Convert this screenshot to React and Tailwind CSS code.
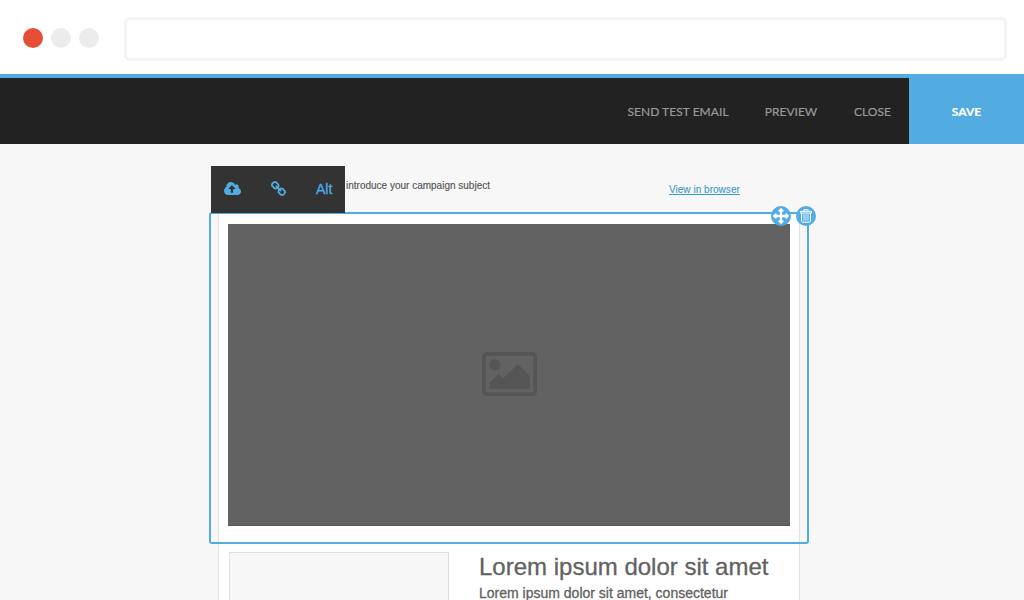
import React from "react";

function CloudUploadIcon() {
  return (
    <svg className="h-[13px] w-[17px]" viewBox="-64 128 1920 1408" preserveAspectRatio="none" fill="currentColor">
      <path d="M1216 864q0-14-9-23l-352-352q-9-9-23-9t-23 9l-351 351q-10 12-10 24 0 14 9 23t23 9h224v352q0 13 9.5 22.5t22.5 9.5h192q13 0 22.5-9.5t9.5-22.5v-352h224q13 0 22.5-9.5t9.5-22.5zm640 288q0 159-112.5 271.5t-271.5 112.5h-1088q-185 0-316.5-131.5t-131.5-316.5q0-130 70-240t188-165q-2-30-2-43 0-212 150-362t362-150q156 0 285.5 87t188.5 231q71-62 166-62 106 0 181 75t75 181q0 76-41 138 130 31 213.5 135.5t83.5 238.5z" />
    </svg>
  );
}

function LinkIcon() {
  return (
    <svg className="h-[15px] w-[15px]" viewBox="80 16 1632 1632" fill="currentColor">
      <path d="M1520 1216q0-40-28-68l-208-208q-28-28-68-28-42 0-72 32 3 3 19 18.5t21.5 21.5 15 19 13 25.5 3.5 27.5q0 40-28 68t-68 28q-15 0-27.5-3.5t-25.5-13-19-15-21.5-21.5-18.5-19q-33 31-33 73 0 40 28 68l206 207q27 27 68 27 40 0 68-26l147-146q28-28 28-67zm-703-705q0-40-28-68l-206-207q-28-28-68-28-39 0-68 27l-147 146q-28 28-28 67 0 40 28 68l208 208q27 27 68 27 42 0 72-31-3-3-19-18.5t-21.5-21.5-15-19-13-25.5-3.5-27.5q0-40 28-68t68-28q15 0 27.5 3.5t25.5 13 19 15 21.5 21.5 18.5 19q33-31 33-73zm895 705q0 120-85 203l-147 146q-83 83-203 83-121 0-204-85l-206-207q-83-83-83-203 0-123 88-209l-88-88q-86 88-208 88-120 0-204-84l-208-208q-84-84-84-204t85-203l147-146q83-83 203-83 121 0 204 85l206 207q83 83 83 203 0 123-88 209l88 88q86-88 208-88 120 0 204 84l208 208q84 84 84 204z" />
    </svg>
  );
}

function MoveIcon() {
  return (
    <svg className="h-[16px] w-[16px]" viewBox="0 0 1792 1792" fill="currentColor">
      <path d="M1792 896q0 26-19 45l-256 256q-19 19-45 19t-45-19-19-45v-128h-384v384h128q26 0 45 19t19 45-19 45l-256 256q-19 19-45 19t-45-19l-256-256q-19-19-19-45t19-45 45-19h128v-384h-384v128q0 26-19 45t-45 19-45-19l-256-256q-19-19-19-45t19-45l256-256q19-19 45-19t45 19 19 45v128h384v-384h-128q-26 0-45-19t-19-45 19-45l256-256q19-19 45-19t45 19l256 256q19 19 19 45t-19 45-45 19h-128v384h384v-128q0-26 19-45t45-19 45 19l256 256q19 19 19 45z" />
    </svg>
  );
}

function TrashIcon() {
  return (
    <svg className="h-[14px] w-[12px]" viewBox="0 0 12 14" fill="none" stroke="currentColor">
      <path d="M3.8 2V.8h4.4V2" />
      <path d="M.5 4V2.3h11V4z" />
      <path d="M1.6 4v8.2q0 1 1 1h6.8q1 0 1-1V4" />
      <path d="M4 5v6.7M6 5v6.7M8 5v6.7" strokeWidth="0.8" />
    </svg>
  );
}

function PictureIcon() {
  return (
    <svg className="h-[44px] w-[55px]" viewBox="-64 128 1920 1536" fill="currentColor">
      <path d="M576 576q0 80-56 136t-136 56-136-56-56-136 56-136 136-56 136 56 56 136zm1024 384v448h-1408v-192l320-320 160 160 512-512zm96-704h-1600q-13 0-22.5 9.5t-9.5 22.5v1216q0 13 9.5 22.5t22.5 9.5h1600q13 0 22.5-9.5t9.5-22.5v-1216q0-13-9.5-22.5t-22.5-9.5zm160 32v1216q0 66-47 113t-113 47h-1600q-66 0-113-47t-47-113v-1216q0-66 47-113t113-47h1600q66 0 113 47t47 113z" />
    </svg>
  );
}

function BrowserBar() {
  return (
    <header className="flex h-[74px] shrink-0 bg-white pl-[23px] pt-[17px]">
      <div className="flex gap-2 pt-[11px]">
        <span className="size-5 rounded-full bg-[#e54e35]" />
        <span className="size-5 rounded-full bg-[#ececec]" />
        <span className="size-5 rounded-full bg-[#ececec]" />
      </div>
      <div className="ml-[25px] h-[44px] w-[883px] rounded-md border-3 border-[#f2f4f4] bg-white" />
    </header>
  );
}

function ActionBar() {
  return (
    <nav className="flex h-[70px] shrink-0 justify-end border-t-4 border-[#52ace1] bg-[#222222] font-['Lato',sans-serif] text-[12px] leading-[67px] text-[#999999] [-webkit-text-stroke:0.2px]">
      <button className="w-[102px] whitespace-nowrap tracking-[0.05px]">SEND TEST EMAIL</button>
      <button className="ml-[35px] w-[54px]">PREVIEW</button>
      <button className="ml-[35px] w-[39px]">CLOSE</button>
      <button className="ml-[17px] h-[66px] w-[115px] bg-[#52ace1] font-bold text-white">SAVE</button>
    </nav>
  );
}

export default function App() {
  return (
    <div className="flex h-[600px] w-[1024px] flex-col overflow-hidden bg-[#f7f7f7] font-['Liberation_Sans',Arial,sans-serif]">
      <BrowserBar />
      <ActionBar />
      <main className="ml-[209px] w-[600px] pt-[22px]">
        <div className="flex h-[46px] text-[10px]">
          <div className="z-10 ml-[2px] flex h-[47px] w-[134px] shrink-0 items-center bg-[#333333] pb-[3px] text-[#52ace1]">
            <span className="ml-[13px]"><CloudUploadIcon /></span>
            <span className="ml-[30px]"><LinkIcon /></span>
            <span className="ml-[30px] pt-[2px] text-[14px] leading-[16px] [-webkit-text-stroke:0.3px]">Alt</span>
          </div>
          <p className="ml-[1px] w-[323px] pt-[12px] leading-[15px] text-[#555555] [-webkit-text-stroke:0.15px]">
            introduce your campaign subject
          </p>
          <a className="whitespace-nowrap pt-[16px] leading-[15px] tracking-[0.03px] text-[#3a9bc9] underline [-webkit-text-stroke:0.1px]">View in browser</a>
        </div>

        <section className="relative h-[332px] rounded-[3px] border-2 border-[#52ace1]">
          <div className="mx-[7px] h-[328px] border-x border-[#e2e2e2] bg-white px-[9px] pt-[10px]">
            <div className="flex h-[302px] items-center justify-center border-b border-[#555555] bg-[#626262] pb-[2px] text-[#555555]">
              <PictureIcon />
            </div>
          </div>
          <div className="absolute -top-[8px] left-[560px] flex gap-[5px] text-white">
            <button className="flex size-5 items-center justify-center rounded-full bg-[#52ace1]"><MoveIcon /></button>
            <button className="flex size-5 items-center justify-center rounded-full bg-[#52ace1]"><TrashIcon /></button>
          </div>
        </section>

        <section className="mx-[9px] flex h-[56px] overflow-hidden border-x border-[#e2e2e2] bg-white pl-[10px] pt-[8px] text-[#626262]">
          <div className="h-[180px] w-[220px] shrink-0 border border-[#dedede] bg-[#f7f7f7]" />
          <div className="ml-[30px] whitespace-nowrap [-webkit-text-stroke:0.3px]">
            <h1 className="text-[24px] leading-[30px]">Lorem ipsum dolor sit amet</h1>
            <p className="text-[14px] leading-[22px]">Lorem ipsum dolor sit amet, consectetur</p>
          </div>
        </section>
      </main>
    </div>
  );
}
